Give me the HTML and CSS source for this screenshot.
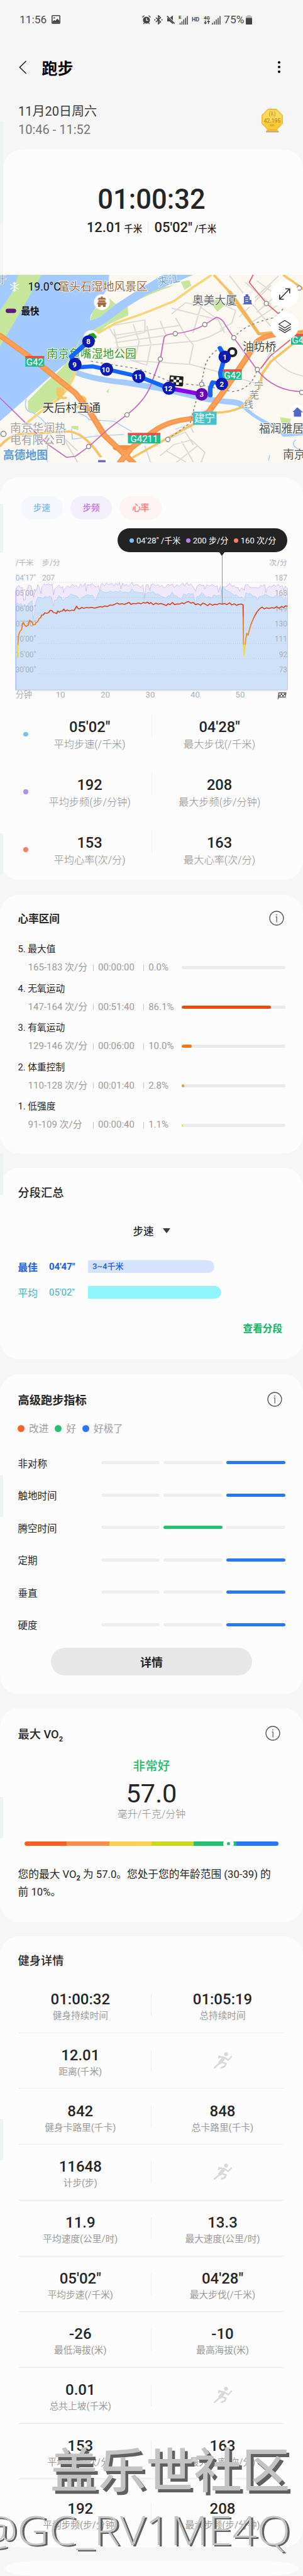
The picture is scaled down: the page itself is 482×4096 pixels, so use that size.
FILE: index.html
```html
<!DOCTYPE html>
<html lang="zh-CN">

<head>
    <meta charset="UTF-8">
    <title>跑步</title>
    <meta name="viewport" content="width=device-width, initial-scale=1.0">
    <link rel="stylesheet" href="styles.css">
</head>

<body>
    <!-- shared icons -->
    <svg class="defs" width="0" height="0">
        <symbol id="info" viewBox="0 0 24 24">
            <circle cx="12" cy="12" r="11" fill="none" stroke="#555" stroke-width="1.3" />
            <circle cx="12" cy="6.6" r=".9" fill="#555" />
            <path d="M10.6 9.8H12.2V18.6" fill="none" stroke="#555" stroke-width="1.2" />
        </symbol>
        <symbol id="runner" viewBox="0 0 29 26">
            <circle cx="19.6" cy="3.3" r="3.1" fill="#d8d8d8" />
            <g fill="none" stroke="#d8d8d8" stroke-linecap="round" stroke-linejoin="round">
                <path d="M15.8 8.6L8.5 6.8L8 9.2" stroke-width="2.8" />
                <path d="M16 9.6L10 16.6" stroke-width="5.4" />
                <path d="M10.5 16.5L1.2 24.8" stroke-width="2.6" />
                <path d="M13.5 16.2L19.3 18.2L17.5 22.6L12.6 24.6" stroke-width="2.8" />
                <path d="M18.3 9.3L23 12.7L28 7.2" stroke-width="2.4" />
            </g>
        </symbol>
    </svg>

    <div class="statusbar">
        <span>11:56</span>
        <svg class="pic" width="14" height="14" viewBox="0 0 14 14">
            <rect x=".8" y=".8" width="12.4" height="12.4" rx="1" fill="none" stroke="#444" stroke-width="1.6" />
            <circle cx="4.3" cy="4.4" r="1.2" fill="#444" />
            <path d="M1.5 10.5L4.3 7.8L6 9.2L9.2 5.8L12.5 9V12.5H1.5Z" fill="#444" />
        </svg>
        <div class="indicators">
            <svg width="14" height="15" viewBox="0 0 14 15">
                <circle cx="7" cy="8" r="5.6" fill="#444" />
                <path d="M7 4.8V8.4H9.8" fill="none" stroke="#f6f6f6" stroke-width="1.3" />
                <path d="M.7 3.8Q1.3 1.6 3.7 1M13.3 3.8Q12.7 1.6 10.3 1M3.4 12.5L2.3 14.2M10.6 12.5L11.7 14.2" fill="none" stroke="#444" stroke-width="1.4" />
            </svg>
            <svg width="14" height="15" viewBox="0 0 14 15">
                <path d="M3 4L10.4 10.8L7 14V1L10.4 4.2L3 11" fill="none" stroke="#444" stroke-width="1.6" />
                <circle cx="1.3" cy="7.5" r="1" fill="#444" />
                <circle cx="12.6" cy="7.5" r="1" fill="#444" />
            </svg>
            <svg width="14" height="15" viewBox="0 0 14 15">
                <path d="M1 4.8H4.4L10 .8V14.2L4.8 10H1Z" fill="#444" />
                <path d="M.2 .6L13.2 13.6" stroke="#f6f6f6" stroke-width="2.8" />
                <path d="M.8 1.6L12.6 13.6" stroke="#444" stroke-width="1.6" />
            </svg>
            <svg width="15" height="15" viewBox="0 0 15 15">
                <text x="0" y="6" class="net">E</text>
                <path d="M2.5 15V12.2M5.4 15V10M8.3 15V7M11.2 15V4.5M14 15V1.5" stroke="#444" stroke-width="1.5" />
            </svg>
            <span class="hd">HD</span>
            <svg width="27" height="15" viewBox="0 0 27 15">
                <text x="0" y="7" class="net">4G</text>
                <path d="M2.7 8.5V13.5M.8 11.6L2.7 13.8L4.6 11.6M7.7 14V9M5.8 11L7.7 8.8L9.6 11" fill="none" stroke="#444" stroke-width="1.3" />
                <path d="M14 15V12.2M17 15V10M20 15V7M23 15V4.5M26 15V1.5" stroke="#444" stroke-width="1.5" />
            </svg>
            <span class="percent">75%</span>
            <svg width="10" height="15" viewBox="0 0 10 15">
                <path d="M0 5V2.4Q0 1.6 1 1.6H2.6V0H7.4V1.6H9Q10 1.6 10 2.4V5Z" fill="#bbb" />
                <rect y="4.6" width="10" height="10.4" rx="1" fill="#444" />
            </svg>
        </div>
    </div>

    <header class="topbar">
        <svg width="13" height="22" viewBox="0 0 13 22">
            <path d="M11.6 1L1.4 11L11.6 21" fill="none" stroke="#222" stroke-width="1.6" />
        </svg>
        <h1>跑步</h1>
        <svg class="more" width="4" height="20" viewBox="0 0 4 20">
            <circle cx="2" cy="2.3" r="2" />
            <circle cx="2" cy="9.6" r="2" />
            <circle cx="2" cy="16.9" r="2" />
        </svg>
    </header>

    <section class="session">
        <div>
            <p class="date">11月20日周六</p>
            <p class="range">10:46 - 11:52</p>
        </div>
        <svg class="medal" width="34" height="38" viewBox="0 0 34 38">
            <path d="M9 32H25L27.5 37.3H7Z" fill="#f2c14a" />
            <path d="M7 35.6H27.5V37.4H7Z" fill="#b9a584" />
            <path d="M10.3 .5H23.7L33.3 10V23.5L23.7 33.5H10.3L.7 23.5V10Z" fill="#fbc83a" stroke="#f0a91d" />
            <path d="M10.8 1.8H23.2L31.8 10.5V16L2.2 23V10.5Z" fill="#fdd95a" />
            <text x="17" y="11" class="medal-top">(λ)</text>
            <text x="17" y="21.5" class="medal-num">42.195</text>
            <text x="17" y="28" class="medal-km">km</text>
        </svg>
    </section>

    <section class="card hero">
        <div class="duration">01:00:32</div>
        <div class="hero-sub">
            <span><b>12.01</b> 千米</span>
            <i></i>
            <span><b>05'02"</b> /千米</span>
        </div>
    </section>

    <section class="map">
        <svg width="482" height="298.5" viewBox="0 0 482 298.5">
            <g transform="scale(.3074 .24793) translate(0 -51)" fill="none" stroke-linecap="round" stroke-linejoin="round">
                <rect y="51" width="1568" height="1205" fill="#fbf8f1" />
                <!-- river and banks -->
                <path d="M0 51H1000L850 130L730 200L660 255L540 365L460 420L420 500L370 590L300 660L200 770L130 850L0 990Z" fill="#a3cbff" />
                <path d="M95 51H215L110 280L0 510V280L60 170Z" fill="#c6e69c" />
                <path d="M565 51H840L700 160L600 240L520 320L465 345L470 310L560 130Z" fill="#fbf8f1" />
                <path d="M545 180L600 240L520 320L465 345L480 290Z" fill="#c6e69c" />
                <path d="M600 240L700 160L830 60H960L850 130L730 200L660 255L540 365L460 420L440 380L520 320Z" fill="#a3cbff" />
                <path d="M660 255L665 310L560 370L500 430L420 510L460 420L540 365Z" fill="#c6e69c" />
                <path d="M420 450L400 520L350 610L400 670L380 720L310 830L180 940L145 925L145 860L230 750L320 650L370 570Z" fill="#c6e69c" />
                <path d="M722 208Q800 140 895 118L880 130Q800 160 722 208ZM935 95L980 85L990 120L955 148ZM1090 230L1135 200L1160 250L1125 288ZM550 800L565 780L560 810ZM370 1020H405V1048L370 1035ZM1450 965L1505 975L1500 1010L1455 1000Z" fill="#c6e69c" />
                <path d="M400 680Q500 725 640 740L830 780L1080 850L1180 865Q1240 868 1255 890" stroke="#a3cbff" stroke-width="36" />
                <path d="M1255 890Q1310 960 1380 1000T1470 1080L1568 1070" stroke="#a3cbff" stroke-width="20" />
                <path d="M135 850Q120 930 170 935L210 970Q250 1010 245 1100V1250M380 930Q450 950 460 980L590 990L680 1055M370 1040L375 1105L500 1085L640 1075M980 960L1080 915M1530 1110Q1500 1140 1545 1170M1395 1210L1390 1240" stroke="#a3cbff" stroke-width="5" />
                <!-- minor streets -->
                <g stroke="#dcdad7" stroke-width="7">
                    <path d="M560 380L750 340L750 420L600 460ZM590 440L930 375M600 520L1020 475M600 485L860 440M680 600L760 630L780 500M610 510L680 600L980 625M690 370L720 480L700 580M760 380L780 490M830 350L860 440M910 330L960 440L1000 500L980 620M890 265L1130 340L1160 420M890 300L960 230L1040 250L1000 420M1060 200L1040 260L1130 340M600 460L570 400M590 400L610 520M985 625L1150 680L1330 750M1150 240L1220 280L1200 360L1140 400M1160 400L1080 450L1020 475M1270 100L1400 240M1330 90L1440 190M1190 60L1260 170L1400 380M1440 60L1310 210M1500 110L1330 290M1480 210L1310 350M1400 120L1240 320M1400 550Q1450 670 1568 700M1400 545L1360 640" />
                    <path d="M830 1210L900 1140L990 1110L1060 1190L1040 1256M880 1100L960 1060L1000 1140M940 1120L1000 1250M860 1180L960 1250M1020 1150L910 1256M910 1040L980 1010L1000 1060M780 1256L750 1150M320 1080L400 1250M300 1060L400 1180" />
                </g>
                <!-- roads -->
                <g stroke="#f3c566" stroke-width="14">
                    <path d="M390 675Q360 780 300 850L210 930L140 1000M500 430L600 360L740 300L900 220L1000 130L1090 56" stroke="#f6d679" />
                    <path d="M1110 56L1180 150L1230 250L1340 430L1400 450L1568 410M1470 56L1568 140M1540 470L1400 610L1360 680L1340 780L1250 900Q1180 940 1090 935L1000 1010L850 1110L690 1220M0 1150Q60 1060 150 1070L360 1055Q450 1070 540 1256M300 780Q290 850 340 840M320 840Q300 770 320 780Q340 800 300 850M420 830Q470 850 400 900" />
                </g>
                <path d="M1190 160L1340 430L1500 410" stroke="#f2b45b" stroke-width="18" />
                <g stroke="#f58f3e" stroke-width="32">
                    <path d="M0 440L180 600L390 810L460 920L540 1080L690 1256" />
                    <path d="M1568 425Q1380 420 1330 480L1240 650L1150 810L1080 930Q1040 970 980 975Q860 990 790 1060L680 1160L620 1256M600 1160H680" />
                </g>
                <g stroke="#ff9f57" stroke-width="22">
                    <path d="M0 440L180 600L390 810L460 920L540 1080L690 1256" />
                    <path d="M1568 425Q1380 420 1330 480L1240 650L1150 810L1080 930Q1040 970 980 975Q860 990 790 1060L680 1160L620 1256" />
                </g>
                <!-- metro lines -->
                <g stroke="#c967b8" stroke-width="6">
                    <path d="M0 840L140 1010L250 1140L345 1222L390 1215L460 1152L560 1040L655 950Q750 860 780 760L830 590L848 460Q850 430 907 428Q1000 415 1060 370L1120 323Q1150 330 1165 370L1210 455L1330 660Q1420 800 1568 800" />
                    <path d="M1310 51L1290 100L1380 235L1450 310M1500 470L1400 570L1350 650" stroke="#e35d6e" />
                </g>
                <path d="M470 605L720 655L900 745L1040 760L1010 880L985 1000L868 1106M1040 760L1060 640Q1080 560 1140 520M1210 455Q1260 370 1420 325L1465 270M1050 760L1200 800Q1300 790 1330 660" stroke="#8b8b88" stroke-width="6" stroke-dasharray="12 14" stroke-linecap="butt" />
                <!-- route -->
                <path d="M458 478L370 575L388 625L400 645L480 638L553 657L718 703L874 778" stroke="#1265ff" stroke-width="26" />
                <path d="M1138 520L1163 577L1140 680L1148 750L1100 740L1088 780V825" stroke="#1265ff" stroke-width="24" />
                <path d="M874 778L1044 817" stroke="#8a00ee" stroke-width="26" />
            </g>
            <g fill="#fff" stroke="#8a8a8a" stroke-width="1.4">
                <circle cx="325.8" cy="79" r="3.5" />
                <circle cx="278.8" cy="93.5" r="3.5" />
                <circle cx="372" cy="100" r="3.5" />
                <circle cx="255" cy="134" r="3.5" />
                <circle cx="409.4" cy="150.5" r="3.5" />
                <circle cx="423.6" cy="45.6" r="3.5" />
                <circle cx="476" cy="21" r="3.5" />
                <circle cx="320.8" cy="174" r="3.5" />
                <circle cx="202" cy="222.6" r="3.5" />
                <circle cx="267" cy="261.8" r="3.5" />
                <circle cx="141" cy="273" r="3.5" />
                <circle cx="5.5" cy="253" r="4.2" />
                <circle cx="480" cy="187" r="3.5" />
            </g>
            <!-- road shields -->
            <g class="shield">
                <rect x="40.3" y="129" width="30" height="17" fill="#1dbd93" />
                <rect x="40.3" y="129" width="30" height="3.5" fill="#ee4a48" />
                <text x="55.3" y="143.7">G42</text>
                <rect x="354.5" y="150.5" width="30" height="16.5" fill="#1dbd93" />
                <rect x="354.5" y="150.5" width="30" height="3.5" fill="#ee4a48" />
                <text x="369.8" y="164.7">G42</text>
                <rect x="203.5" y="251.5" width="51.5" height="16.5" fill="#1dbd93" />
                <rect x="203.5" y="251.5" width="51.5" height="3.5" fill="#ee4a48" />
                <text x="229.5" y="266">G4211</text>
                <rect x="463" y="94" width="19" height="17" fill="#1dbd93" />
                <rect x="463" y="94" width="19" height="3.5" fill="#ee4a48" />
                <text x="473.5" y="108.5">G4</text>
                <rect x="307" y="217.5" width="37.5" height="21" fill="#45c3cd" />
                <text x="325.6" y="233.8" class="town">建宁</text>
            </g>
            <!-- places -->
            <g class="place">
                <text x="-8" y="14" fill="#9b9b9b">圩</text>
                <text x="92.5" y="24.5" fill="#a3683e">鼋头石湿地风景区</text>
                <text x="252" y="18" fill="#6f9fdc" transform="rotate(-12 252 18)">夹江</text>
                <text x="306" y="46.5" fill="#666">奥美大厦</text>
                <text x="386" y="120.5" fill="#444">油坊桥</text>
                <text x="74.5" y="132" fill="#2d9b2b">南京鱼嘴湿地公园</text>
                <text x="67.5" y="217.5" fill="#333" class="big">天后村互通</text>
                <text x="16" y="249.5" fill="#a0a0a0">南京华润热</text>
                <text x="16" y="269" fill="#a0a0a0">电有限公司</text>
                <text x="412" y="250.5" fill="#555">福润雅居</text>
                <text x="450" y="292" fill="#555">南京</text>
                <text x="404" y="181" fill="#888" class="sm">宁</text>
                <text x="397" y="196" fill="#888" class="sm">芜</text>
                <text x="388" y="211" fill="#888" class="sm">线</text>
                <text x="5" y="293" fill="#5b9bd8" class="amap">高德地图</text>
            </g>
            <path d="M458 478L370 575L388 625" transform="scale(.3074 .24793) translate(0 -51)" fill="none" stroke="#1265ff" stroke-width="26" stroke-linejoin="round" />
            <!-- poi -->
            <circle cx="162" cy="43.5" r="12.5" fill="#fff" />
            <path d="M155 39.5H169L167 36.5H157ZM156.5 43H167.5V40.5H156.5ZM154 46.5H170L168 43.5H156ZM156 51V46.5H168V51H164V48.5H160V51ZM160.5 36.5V34.5H163.5V36.5Z" fill="#a06a3c" />
            <circle cx="393.6" cy="39" r="12" fill="#fff" />
            <path d="M388 46V34H390.5V31H395V34H397V40H400V46ZM386.5 45.5H401V47H386.5Z" fill="#5468c4" />
            <path d="M390.5 36.5H395M390.5 39.5H395M390.5 42.5H395" stroke="#fff" stroke-width="1" />
            <circle cx="473" cy="218.5" r="12" fill="#fff" />
            <path d="M465.5 218L473 210.5L482 218.5H479V225.5H467.5V218Z" fill="#5468c4" />
            <circle cx="162" cy="302" r="12" fill="#fff" />
            <rect x="156" y="294.5" width="12" height="6" rx="1" fill="#7b63c9" />
            <circle cx="145" cy="100" r="12" fill="#fff" />
            <path d="M140 97A4.5 4.5 0 0 1 145 93.5A4.5 4.5 0 0 1 152 96A4 4 0 0 1 153 101H150L152 106H147V101H142Z" fill="#21a021" />
            <circle cx="369.5" cy="123" r="6" fill="#fff" stroke="#222" stroke-width="4" />
            <g transform="translate(270 160) rotate(4)">
                <rect width="22" height="16" rx="1.5" fill="#1e1e1e" />
                <path d="M2 2H6.5V6H2ZM11 2H15.5V6H11ZM6.5 6H11V10H6.5ZM15.5 6H20V10H15.5ZM2 10H6.5V14H2ZM11 10H15.5V14H11Z" fill="#fff" />
            </g>
            <g class="pin">
                <circle cx="140.8" cy="105.9" r="10" />
                <circle cx="119.3" cy="142.5" r="10.5" />
                <circle cx="169.7" cy="150.3" r="10.5" />
                <circle cx="220.7" cy="161.7" r="10.5" />
                <circle cx="268.7" cy="180.3" r="10.5" />
                <circle cx="357.5" cy="130.4" r="10" />
                <circle cx="352.9" cy="173.5" r="10" />
                <circle cx="320.9" cy="190" r="10" fill="#6c00b8" />
                <text x="140.6" y="110">8</text>
                <text x="118.5" y="146.5">9</text>
                <text x="168" y="155">10</text>
                <text x="219.5" y="166">11</text>
                <text x="267.5" y="184.5">12</text>
                <text x="357.5" y="134.8">1</text>
                <text x="352.9" y="178">2</text>
                <text x="320.9" y="194">3</text>
            </g>
            <!-- weather and legend -->
            <path d="M23 11V27M16 15L30 23M16 23L30 15M20.5 12.5L23 15L25.5 12.5M20.5 25.5L23 23L25.5 25.5" fill="none" stroke="#fff" stroke-width="1.3" />
            <text x="44.5" y="24.8" class="temp">19.0°C</text>
            <rect x="9.5" y="54.2" width="15.8" height="6" rx="2.5" fill="#6a1296" stroke="#333" stroke-width=".8" />
            <text x="33.5" y="62.5" class="fast">最快</text>
            <!-- map buttons -->
            <circle cx="453" cy="30.5" r="22" fill="#fff" />
            <path d="M445 38.5L460.5 22.5M454 22.3H460.8V29.5M444.8 31.5V38.7H451.5" fill="none" stroke="#333" stroke-width="1.6" />
            <circle cx="453" cy="81.5" r="22" fill="#fff" />
            <path d="M443.5 78.5L453 72.5L462.5 78.5L453 84.5ZM443.5 82.5L453 88.3L462.5 82.5M443.5 86L453 91.8L462.5 86" fill="none" stroke="#333" stroke-width="1.4" stroke-linejoin="round" />
        </svg>
    </section>

    <section class="card chart-card">
        <div class="chips">
            <span class="chip pace">步速</span>
            <span class="chip cadence">步频</span>
            <span class="chip heart">心率</span>
        </div>
        <div class="tooltip">
            <span class="pace">04'28" /千米</span>
            <span class="cadence">200 步/分</span>
            <span class="heart">160 次/分</span>
        </div>
        <svg class="chart" width="482" height="238" viewBox="0 0 482 238">
            <defs>
                <linearGradient id="hr" gradientUnits="userSpaceOnUse" x1="0" y1="900" x2="0" y2="1220">
                    <stop offset="0" stop-color="#d93f1c" />
                    <stop offset=".12" stop-color="#d9481c" />
                    <stop offset=".22" stop-color="#f0701c" />
                    <stop offset=".72" stop-color="#f09a22" />
                    <stop offset=".75" stop-color="#f6d820" />
                    <stop offset="1" stop-color="#f8e11c" />
                </linearGradient>
            </defs>
            <g transform="translate(0 -134.2) scale(.3074 .24793)" stroke-linejoin="round">
                <path d="M80 1425V790L88 765L98 755L108 772L117 768L122 850L130 848L134 790L140 785L150 752L160 756L168 800L174 830L178 800L190 785L195 750L203 765L212 808L217 760L228 745L238 752L250 744L262 752L270 745L277 815L284 775L295 765L305 752L315 770L324 760L328 800L336 775L350 758L362 768L375 748L385 762L396 755L408 770L416 745L428 762L440 740L446 792L452 750L468 752L476 743L490 760L500 765L508 755L516 790L522 750L530 742L540 757L552 738L560 750L570 745L580 742L590 758L600 740L608 752L618 735L626 776L634 740L642 756L655 748L664 760L678 745L684 735L692 758L704 748L716 752L726 768L740 750L748 835L756 752L766 748L776 790L782 750L794 745L806 757L818 748L828 765L838 752L848 770L858 765L868 748L880 754L892 745L902 768L915 750L928 760L938 748L945 740L955 757L968 735L976 755L988 744L1000 765L1012 792L1020 758L1034 748L1046 756L1054 752L1060 778L1070 750L1085 758L1100 748L1114 762L1124 756L1132 800L1140 757L1146 810L1154 762L1166 765L1176 756L1190 742L1200 760L1212 755L1222 770L1232 768L1240 792L1250 770L1262 785L1270 752L1282 748L1292 765L1304 770L1320 768L1340 772L1350 752L1358 760L1370 748L1376 802L1384 770L1394 758L1406 765L1415 750L1428 762L1440 746L1450 764L1460 755L1468 784L1476 758L1488 775V1425Z" fill="#f0e9fa" stroke="#c8b2ee" stroke-width="3" />
                <path d="M80 1425V890L90 865L100 880L108 870L118 892L126 875L138 892L148 870L160 858L166 852L171 970L180 925L186 860L196 830L210 832L222 840L234 824L246 832L258 822L268 835L275 890L282 850L294 845L304 820L316 832L326 852L338 836L352 828L368 808L382 818L398 822L412 848L426 830L440 822L452 814L468 820L480 818L492 850L502 830L510 800L520 786L532 795L546 800L560 798L572 790L586 800L598 792L612 796L622 788L634 800L646 796L660 802L672 800L682 776L694 795L708 796L722 802L738 800L746 850L754 808L766 800L780 802L792 792L806 812L818 810L832 822L846 830L860 838L870 820L880 822L890 796L902 818L912 820L925 835L940 842L950 808L964 818L976 804L988 812L1000 806L1010 880L1020 825L1032 822L1044 800L1054 812L1066 832L1080 826L1094 836L1106 815L1120 822L1134 816L1142 826L1150 764L1160 775L1172 786L1186 795L1200 806L1212 818L1224 815L1238 832L1252 828L1266 850L1272 800L1284 808L1296 806L1310 824L1322 826L1330 848L1344 825L1358 822L1372 812L1386 820L1400 828L1414 832L1428 820L1440 826L1450 812L1462 835L1470 850L1478 830L1488 845V1425Z" fill="#cfe0f9" stroke="#a9d1f6" stroke-width="3" />
                <path d="M197 735H1488M197 832H1488M197 931H1488M197 1029H1488M197 1127H1488M197 1225H1488M197 1323H1488" stroke="#b4bcc9" stroke-width="3" stroke-dasharray="3 7" />
                <path d="M80 1422H1488" stroke="#ccd6e4" stroke-width="5" />
                <path d="M84 770V1420" stroke="#b9b6ee" stroke-width="3" />
            </g>
            <g class="axis">
                <text x="24.7" y="21">/千米</text>
                <text x="67" y="21">步/分</text>
                <text x="24.7" y="44.8">04'17"</text>
                <text x="67" y="44.8">207</text>
                <text x="24.7" y="69.2">05'00"</text>
                <text x="24.7" y="93.5">06'00"</text>
                <text x="24.7" y="118">07'30"</text>
                <text x="24.7" y="142.3">10'00"</text>
                <text x="24.7" y="166.7">15'00"</text>
                <text x="24.7" y="191">30'00"</text>
            </g>
            <g class="axis right">
                <text x="457" y="21">次/分</text>
                <text x="457" y="44.8">187</text>
                <text x="457" y="69.2">168</text>
                <text x="457" y="93.5">149</text>
                <text x="457" y="118">130</text>
                <text x="457" y="142.3">111</text>
                <text x="457" y="166.7">92</text>
                <text x="457" y="191">73</text>
            </g>
            <g transform="translate(0 -134.2) scale(.3074 .24793)" fill="none" stroke-linejoin="round">
                <path d="M90 1220L93 1130L97 1070L103 1050L112 1038L117 1000L122 993L128 1010L136 1018L146 1008L153 978L160 985L168 995L172 1008L182 1006L186 992L193 990L204 965L210 962L216 945L224 944L232 930L242 934L252 928L260 914L268 915L276 928L285 930L293 935L299 918L306 926L314 920L324 918L330 906L338 920L348 912L358 918L372 913L384 915L396 888L404 903L412 905L424 896L434 902L446 896L460 898L474 895L490 900L504 895L520 890L530 894L542 886L556 890L570 880L580 882L594 876L606 868L618 875L630 872L644 876L656 870L668 864L678 876L690 870L704 872L716 867L730 872L742 864L752 868L764 862L772 872L780 864L794 878L806 868L820 875L832 870L846 876L860 884L870 872L880 878L892 864L904 878L916 873L930 874L942 866L952 872L964 862L976 858L988 868L1000 864L1012 878L1024 872L1038 882L1050 868L1062 874L1074 884L1086 872L1100 882L1112 875L1124 878L1136 870L1150 875L1162 870L1174 878L1188 866L1200 880L1212 872L1224 882L1236 876L1248 874L1258 880L1260 1130L1263 1206L1266 1170L1272 1100L1277 1062L1284 1074L1288 1050L1300 1000L1314 960L1328 928L1342 906L1356 893L1368 905L1380 898L1392 902L1406 897L1420 900L1432 892L1444 901L1456 890L1468 896L1478 885L1488 888" stroke="url(#hr)" stroke-width="6" />
                <path d="M1150 565V872" stroke="#777" stroke-width="3" />
            </g>
            <g class="axis minutes">
                <text x="24.7" y="231">分钟</text>
                <text x="88.7" y="231">10</text>
                <text x="160" y="231">20</text>
                <text x="231.5" y="231">30</text>
                <text x="303" y="231">40</text>
                <text x="374.5" y="231">50</text>
            </g>
            <path d="M443.5 223L442.3 234" stroke="#666" stroke-width="1.3" />
            <path d="M444 223.5H455L453.8 230.5H443.3Z" fill="#fafafa" stroke="#666" stroke-width="1.3" />
            <path d="M446.5 224.5H449V227H446.5ZM451.5 224.5H454V227H451.5ZM449 227H451.5V229.5H449ZM444.5 227H446.5V229.5H444.5Z" fill="#555" />
        </svg>
        <div class="stat-row pace">
            <i class="dot"></i>
            <div><b>05'02"</b><span>平均步速(/千米)</span></div>
            <i class="line"></i>
            <div><b>04'28"</b><span>最大步伐(/千米)</span></div>
        </div>
        <div class="stat-row cadence">
            <i class="dot"></i>
            <div><b>192</b><span>平均步频(步/分钟)</span></div>
            <i class="line"></i>
            <div><b>208</b><span>最大步频(步/分钟)</span></div>
        </div>
        <div class="stat-row heart">
            <i class="dot"></i>
            <div><b>153</b><span>平均心率(次/分)</span></div>
            <i class="line"></i>
            <div><b>163</b><span>最大心率(次/分)</span></div>
        </div>
    </section>

    <section class="card zones">
        <div class="card-head">
            <h2>心率区间</h2>
            <svg width="24" height="24"><use href="#info" /></svg>
        </div>
        <div class="zone">
            <h3>5. 最大值</h3>
            <div class="zone-data"><span>165-183 次/分</span><i></i><span>00:00:00</span><i></i><span>0.0%</span>
                <div class="track"></div>
            </div>
        </div>
        <div class="zone">
            <h3>4. 无氧运动</h3>
            <div class="zone-data"><span>147-164 次/分</span><i></i><span>00:51:40</span><i></i><span>86.1%</span>
                <div class="track"><div class="fill z4" style="width: 86.1%"></div></div>
            </div>
        </div>
        <div class="zone">
            <h3>3. 有氧运动</h3>
            <div class="zone-data"><span>129-146 次/分</span><i></i><span>00:06:00</span><i></i><span>10.0%</span>
                <div class="track"><div class="fill z3" style="width: 10%"></div></div>
            </div>
        </div>
        <div class="zone">
            <h3>2. 体重控制</h3>
            <div class="zone-data"><span>110-128 次/分</span><i></i><span>00:01:40</span><i></i><span>2.8%</span>
                <div class="track"><div class="fill z2" style="width: 2.8%"></div></div>
            </div>
        </div>
        <div class="zone">
            <h3>1. 低强度</h3>
            <div class="zone-data"><span>91-109 次/分</span><i></i><span>00:00:40</span><i></i><span>1.1%</span>
                <div class="track"><div class="fill z1" style="width: 1.1%"></div></div>
            </div>
        </div>
    </section>

    <section class="card splits">
        <div class="card-head">
            <h2>分段汇总</h2>
        </div>
        <div class="select">步速<i></i></div>
        <div class="split best">
            <span>最佳</span><span>04'47"</span>
            <div class="split-bar" style="width: 201.5px">3~4千米</div>
        </div>
        <div class="split avg">
            <span>平均</span><span>05'02"</span>
            <div class="split-bar" style="width: 212.3px"></div>
        </div>
        <a class="link">查看分段</a>
    </section>

    <section class="card metrics">
        <div class="card-head">
            <h2>高级跑步指标</h2>
            <svg width="24" height="24"><use href="#info" /></svg>
        </div>
        <div class="legend">
            <span class="improve">改进</span>
            <span class="good">好</span>
            <span class="great">好极了</span>
        </div>
        <div class="metric"><span>非对称</span><i></i><i></i><i class="great"></i></div>
        <div class="metric"><span>触地时间</span><i></i><i></i><i class="great"></i></div>
        <div class="metric"><span>腾空时间</span><i></i><i class="good"></i><i></i></div>
        <div class="metric"><span>定期</span><i></i><i></i><i class="great"></i></div>
        <div class="metric"><span>垂直</span><i></i><i></i><i class="great"></i></div>
        <div class="metric"><span>硬度</span><i></i><i></i><i class="great"></i></div>
        <button class="detail-btn" type="button">详情</button>
    </section>

    <section class="card vo2">
        <div class="card-head">
            <h2>最大 VO<sub>2</sub></h2>
            <svg width="24" height="24"><use href="#info" /></svg>
        </div>
        <div class="grade">非常好</div>
        <div class="score">57.0</div>
        <div class="unit">毫升/千克/分钟</div>
        <div class="scale">
            <i></i><i></i><i></i><i></i><i></i><i></i>
            <div class="marker"></div>
        </div>
        <p>您的最大 VO<sub>2</sub> 为 57.0。您处于您的年龄范围 (30-39) 的<br>前 10%。</p>
    </section>

    <section class="card details">
        <div class="card-head">
            <h2>健身详情</h2>
        </div>
        <div class="pair">
            <div><b>01:00:32</b><span>健身持续时间</span></div>
            <i></i>
            <div><b>01:05:19</b><span>总持续时间</span></div>
        </div>
        <div class="pair">
            <div><b>12.01</b><span>距离(千米)</span></div>
            <i></i>
            <div><svg width="29" height="26"><use href="#runner" /></svg></div>
        </div>
        <div class="pair">
            <div><b>842</b><span>健身卡路里(千卡)</span></div>
            <i></i>
            <div><b>848</b><span>总卡路里(千卡)</span></div>
        </div>
        <div class="pair">
            <div><b>11648</b><span>计步(步)</span></div>
            <i></i>
            <div><svg width="29" height="26"><use href="#runner" /></svg></div>
        </div>
        <div class="pair">
            <div><b>11.9</b><span>平均速度(公里/时)</span></div>
            <i></i>
            <div><b>13.3</b><span>最大速度(公里/时)</span></div>
        </div>
        <div class="pair">
            <div><b>05'02"</b><span>平均步速(/千米)</span></div>
            <i></i>
            <div><b>04'28"</b><span>最大步伐(/千米)</span></div>
        </div>
        <div class="pair">
            <div><b>-26</b><span>最低海拔(米)</span></div>
            <i></i>
            <div><b>-10</b><span>最高海拔(米)</span></div>
        </div>
        <div class="pair">
            <div><b>0.01</b><span>总共上坡(千米)</span></div>
            <i></i>
            <div><svg width="29" height="26"><use href="#runner" /></svg></div>
        </div>
        <div class="pair">
            <div><b>153</b><span>平均心率(次/分)</span></div>
            <i></i>
            <div><b>163</b><span>最大心率(次/分)</span></div>
        </div>
        <div class="pair last">
            <div><b>192</b><span>平均步频(步/分钟)</span></div>
            <i></i>
            <div><b>208</b><span>最大步频(步/分钟)</span></div>
        </div>
    </section>

    <section class="card next"></section>

    <!-- edge panel handle, repeated down the stitched page -->
    <i class="edge e1"></i>
    <i class="edge e2"></i>
    <i class="edge e3"></i>
    <i class="edge e4"></i>
    <i class="edge e5"></i>
    <i class="edge e6"></i>
    <i class="edge e7"></i>

    <svg class="watermark" width="482" height="200" viewBox="0 0 482 200">
        <text class="wm-cn" x="80" y="96" textLength="381">盖乐世社区</text>
        <text class="wm-id" x="-34" y="187" textLength="496" lengthAdjust="spacingAndGlyphs">@GC_RV1ME4Q</text>
    </svg>
</body>

</html>
```

FILE: styles.css
```css
* {
    margin: 0;
    padding: 0;
    box-sizing: border-box;
}

body {
    position: relative;
    width: 482px;
    height: 4096px;
    overflow: hidden;
    background: #f6f6f6;
    color: #252525;
    font-family: Roboto, "Noto Sans CJK SC", sans-serif;
    font-size: 15px;
}

svg {
    display: block;
    flex: none;
}

i {
    font-style: normal;
}

b {
    font-weight: 500;
}

.defs {
    position: absolute;
}

.statusbar {
    display: flex;
    align-items: center;
    height: 62.8px;
    padding: 0 81px 0 31px;
    color: #4a4a4a;
    font-size: 17.4px;
}

.pic {
    margin-left: 7.5px;
}

.indicators {
    display: flex;
    align-items: center;
    gap: 5.6px;
    margin-left: auto;
}

.net {
    font-size: 8px;
    font-weight: 700;
    fill: #444;
}

.hd {
    width: 13px;
    font-size: 9px;
    font-weight: 700;
}

.percent {
    margin-right: -3px;
}

.topbar {
    display: flex;
    align-items: center;
    height: 88.4px;
    padding: 0 36px 0 30px;
}

.topbar h1 {
    margin-left: 23.5px;
    color: #000;
    font-size: 25px;
    font-weight: 700;
}

.more {
    margin-left: auto;
}

.session {
    display: flex;
    justify-content: space-between;
    align-items: center;
    height: 59px;
    margin-top: 11.5px;
    padding: 0 32px 0 29px;
    font-size: 20px;
    line-height: 29.5px;
}

.date {
    color: #3c3c3c;
}

.range {
    color: #757575;
}

.medal text {
    text-anchor: middle;
    fill: #c48a1c;
}

.medal-top {
    font-size: 9px;
}

.medal-num {
    font-size: 8.5px;
    font-weight: 500;
}

.medal-km {
    font-size: 5px;
}

.card {
    background: #fcfcfc;
    border-radius: 30px;
    overflow: hidden;
}

.hero {
    height: 198.7px;
    margin: 16.2px 0 0 5px;
    padding: 50.6px 5px 0 0;
    border-radius: 30px 30px 0 0;
    text-align: center;
}

.duration {
    font-size: 43.5px;
    font-weight: 500;
    line-height: 60px;
}

.hero-sub {
    display: flex;
    justify-content: center;
    gap: 9px;
    font-size: 14.5px;
    font-weight: 500;
    line-height: 28px;
}

.hero-sub b {
    font-size: 22px;
}

.hero-sub i {
    width: 1px;
    height: 19px;
    margin-top: 4px;
    background: #ececec;
}

.map {
    height: 298.4px;
    overflow: hidden;
}

.place text {
    font-size: 17.8px;
    paint-order: stroke;
    stroke: #fff;
    stroke-width: 1.5px;
}

.place .big {
    font-size: 18.5px;
}

.place .sm {
    font-size: 15px;
}

.place .amap {
    font-weight: 700;
}

.shield text {
    font-size: 15px;
    text-anchor: middle;
    fill: #fff;
}

.shield .town {
    font-size: 16.5px;
}

.pin circle:not([fill]) {
    fill: #0b18b2;
}

.pin text {
    font-size: 11.5px;
    font-weight: 700;
    text-anchor: middle;
    fill: #fff;
}

.temp {
    font-size: 17.5px;
    fill: #111;
}

.fast {
    font-size: 14.5px;
    font-weight: 700;
    fill: #111;
}

.chart-card {
    height: 640.3px;
    margin-top: 23.7px;
    padding-top: 30.5px;
}

.chips {
    display: flex;
    gap: 12px;
    padding-left: 33px;
}

.chip {
    width: 66.7px;
    height: 36.6px;
    border-radius: 18.3px;
    font-size: 13.5px;
    font-weight: 500;
    line-height: 37px;
    text-align: center;
}

.chip.pace {
    background: #f4f8fc;
    color: #76baf6;
}

.chip.cadence {
    background: #f3effb;
    color: #b37be8;
}

.chip.heart {
    background: #fdf3f2;
    color: #fb7865;
}

.tooltip {
    position: relative;
    display: flex;
    align-items: center;
    gap: 8.5px;
    width: 270.4px;
    height: 38px;
    margin: 14px 0 0 187px;
    padding-left: 19px;
    border-radius: 19px;
    background: #232323;
    color: #fff;
    font-size: 13px;
    white-space: nowrap;
}

.tooltip::after {
    content: "";
    position: absolute;
    top: 37.5px;
    left: 161px;
    border: 5.5px solid transparent;
    border-top: 7px solid #232323;
}

.tooltip span::before {
    content: "";
    display: inline-block;
    width: 7px;
    height: 7px;
    margin-right: 4px;
    border-radius: 50%;
    background: #7cc0fa;
    vertical-align: 1.5px;
}

.tooltip .cadence::before {
    background: #b983ea;
}

.tooltip .heart::before {
    background: #fb7f6c;
}

.axis text {
    font-size: 11.9px;
    fill: #a9b0b9;
}

.axis.right text {
    text-anchor: end;
}

.axis.minutes text {
    font-size: 13.2px;
}

.stat-row {
    display: grid;
    grid-template-columns: 44.6px 196px 1px 215px;
    height: 91.9px;
    padding-top: 25.6px;
    text-align: center;
}

.stat-row b,
.stat-row span {
    display: block;
}

.stat-row b {
    font-size: 23.7px;
    line-height: 30px;
}

.stat-row span {
    color: #8e8e8e;
    font-size: 16.2px;
    font-weight: 300;
    line-height: 26.6px;
}

.dot {
    width: 7.4px;
    height: 7.4px;
    margin: 22.2px 0 0 37.3px;
    border-radius: 50%;
    background: #7abff5;
}

.cadence .dot {
    background: #aa93ef;
}

.heart .dot {
    background: #f47f6c;
}

.line {
    height: 36px;
    margin-top: -5px;
    background: #eee;
}

.card-head {
    display: flex;
    align-items: center;
    justify-content: space-between;
    padding: 0 30px 0 28.6px;
}

h2 {
    font-size: 18.2px;
    font-weight: 500;
}

sub {
    font-size: 11px;
    font-weight: 700;
    line-height: 0;
}

.zones {
    height: 411px;
    margin-top: 24px;
}

.zones .card-head {
    height: 75px;
}

.zones h2 {
    font-size: 16.6px;
    font-weight: 700;
}

.zone {
    height: 62.6px;
    padding-left: 28.6px;
}

.zone h3 {
    font-size: 14.7px;
    font-weight: 400;
    line-height: 22px;
}

.zone-data {
    display: grid;
    grid-template-columns: 103.5px 8px 71.5px 8.6px 52.6px 165px;
    align-items: center;
    padding-left: 16px;
    color: #9b9b9b;
    font-size: 15px;
    line-height: 37.4px;
}

.zone-data i {
    width: 1px;
    height: 10px;
    background: #c4c4c4;
}

.track {
    height: 5px;
    border-radius: 2.5px;
    background: #eaeaea;
    overflow: hidden;
}

.fill {
    height: 5px;
    border-radius: 2.5px;
}

.z4 {
    background: #ee4a0c;
}

.z3 {
    background: #fa7412;
}

.z2 {
    background: #e8963a;
}

.z1 {
    background: #ecdc4c;
}

.splits {
    height: 304px;
    margin-top: 23.5px;
}

.splits .card-head {
    height: 74.4px;
}

.select {
    display: flex;
    align-items: center;
    justify-content: center;
    gap: 14px;
    height: 49.6px;
    margin-bottom: 12px;
    font-size: 16.5px;
    font-weight: 500;
}

.select i {
    border: 6px solid transparent;
    border-top: 8.5px solid #3c3c3c;
    border-bottom: 0;
}

.split {
    display: grid;
    grid-template-columns: 49.4px 62px auto;
    align-items: center;
    justify-content: start;
    height: 41.1px;
    padding-left: 28.6px;
    font-size: 15.6px;
}

.split span:nth-child(2) {
    font-size: 15px;
}

.split-bar {
    height: 20.8px;
    padding-left: 7px;
    border-radius: 0 10.4px 10.4px 0;
    font-size: 13px;
    font-weight: 500;
    line-height: 20px;
}

.best {
    color: #1b5fe6;
    font-weight: 700;
}

.best .split-bar {
    background: #d5e3fe;
}

.avg {
    color: #33b5be;
}

.avg .split-bar {
    background: #8df5fb;
}

.link {
    display: block;
    padding-right: 33px;
    color: #0fb662;
    font-size: 15.6px;
    font-weight: 700;
    line-height: 74.4px;
    text-align: right;
}

.metrics {
    height: 509.5px;
    margin-top: 23.5px;
}

.metrics .card-head {
    height: 77px;
    padding: 4px 32.6px 0 28.6px;
}

.metrics h2 {
    font-weight: 700;
}

.legend {
    display: flex;
    gap: 10px;
    height: 38px;
    padding-left: 28px;
    color: #9d9d9d;
    font-size: 15.6px;
    line-height: 20px;
}

.legend span::before {
    content: "";
    display: inline-block;
    width: 10.8px;
    height: 10.8px;
    margin-right: 7.3px;
    border-radius: 50%;
    background: #fb6226;
}

.legend .good::before,
.metric .good {
    background: #22c070;
}

.legend .great::before,
.metric .great {
    background: #2878f5;
}

.metric {
    display: grid;
    grid-template-columns: 126.2px repeat(3, 93.6px);
    column-gap: 6px;
    align-items: center;
    height: 51.55px;
    padding-left: 28.6px;
    font-size: 15.5px;
}

.metric i {
    height: 5px;
    border-radius: 2.5px;
    background: #eee;
}

.detail-btn {
    display: block;
    width: 320px;
    height: 44.8px;
    margin: 10.3px auto 0;
    border: none;
    border-radius: 22.4px;
    background: #e7e7e7;
    color: #252525;
    font-family: inherit;
    font-size: 18px;
    font-weight: 700;
}

.vo2 {
    height: 339.7px;
    margin-top: 21.5px;
    text-align: center;
}

.vo2 .card-head {
    height: 80.6px;
    padding-right: 36.3px;
}

.grade {
    color: #22bd6c;
    font-size: 19.6px;
    font-weight: 500;
    line-height: 24px;
}

.score {
    margin-top: 6px;
    font-size: 41.5px;
    line-height: 50px;
}

.unit {
    color: #8e8e8e;
    font-size: 16px;
    font-weight: 300;
    line-height: 16px;
}

.scale {
    position: relative;
    display: grid;
    grid-template-columns: repeat(6, 1fr);
    width: 404.6px;
    height: 7.4px;
    margin: 35.3px auto 32px;
}

.scale i {
    background: #fb5f26;
}

.scale i:first-child {
    border-radius: 4px 0 0 4px;
}

.scale i:nth-child(2) {
    background: #fa9047;
}

.scale i:nth-child(3) {
    background: #fdd14f;
}

.scale i:nth-child(4) {
    background: #cad81e;
}

.scale i:nth-child(5) {
    background: #22c070;
}

.scale i:nth-child(6) {
    background: #2479fb;
    border-radius: 0 4px 4px 0;
}

.marker {
    position: absolute;
    top: -4.8px;
    left: 316px;
    width: 17px;
    height: 17px;
    border: 6px solid #fff;
    border-radius: 50%;
    background: #22c070;
    box-shadow: 0 0 2px rgba(0, 0, 0, .15);
}

.vo2 p {
    padding-left: 28.6px;
    font-size: 16.7px;
    line-height: 27.5px;
    text-align: left;
    white-space: nowrap;
}

.details {
    height: 971px;
    margin-top: 23.3px;
}

.details .card-head {
    height: 65.2px;
    padding-top: 9.2px;
}

.pair {
    display: grid;
    grid-template-columns: 196px 1px 1fr;
    height: 88.7px;
    margin: 0 29.8px;
    padding-top: 20.2px;
    border-bottom: 1px solid #ececec;
    text-align: center;
}

.pair b,
.pair span {
    display: block;
}

.pair b {
    font-size: 24px;
    line-height: 30px;
}

.pair span {
    color: #9a9a9a;
    font-size: 14.7px;
    line-height: 22.4px;
}

.pair i {
    width: 1px;
    height: 34px;
    margin: 7px 0 0 14px;
    background: #ececec;
}

.pair div:last-child {
    padding-left: 29px;
}

.pair svg {
    margin: 10px auto 0;
}

.pair.last {
    padding-top: 31.7px;
    border: none;
}

.next {
    width: 468px;
    height: 24px;
    margin: 21.7px 0 0 7px;
    border-radius: 50px / 12px;
}

/* edge panel handle */
.edge {
    position: absolute;
    left: 0;
    width: 5px;
    height: 66px;
    border-radius: 0 3px 3px 0;
    background: #ebf4f1;
}

.e1 {
    top: 192.6px;
    height: 163px;
}

.e2 {
    top: 801px;
    height: 78px;
}

.e3 {
    top: 1325px;
}

.e4 {
    top: 1834px;
}

.e5 {
    top: 2346px;
}

.e6 {
    top: 2857px;
}

.e7 {
    top: 3369px;
}

.watermark {
    position: absolute;
    top: 3860px;
    left: 0;
    fill: #c3c3c3;
}

.wm-cn {
    font-family: "Noto Sans CJK SC", sans-serif;
    font-size: 76px;
    font-weight: 500;
    text-shadow: 4.5px 4.5px 0 #606060;
}

.wm-id {
    font-family: "Open Sans", "Noto Sans", sans-serif;
    font-size: 64px;
    font-weight: 300;
    text-shadow: 3px 2px 0 #606060;
}
```
